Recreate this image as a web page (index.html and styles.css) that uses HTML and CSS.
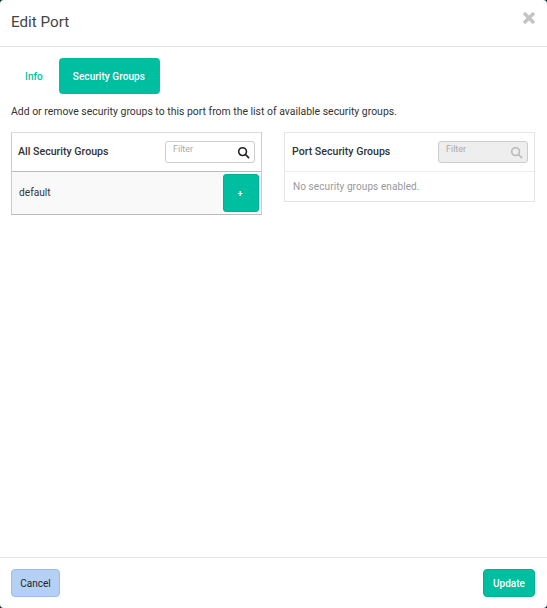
FILE: index.html
```html
<!DOCTYPE html>
<html lang="en">
<head>
<meta charset="utf-8">
<title>Edit Port</title>
<link rel="stylesheet" href="styles.css">
</head>
<body>
<div class="modal">
  <header class="modal-header">
    <h1 class="modal-title">Edit Port</h1>
    <svg class="close" viewBox="0 0 14 14" width="14" height="14" aria-label="Close"><path d="M2 2l10 10M12 2L2 12" /></svg>
  </header>
  <main class="modal-body">
    <nav class="tabs">
      <a class="tab">Info</a>
      <a class="tab active">Security Groups</a>
    </nav>
    <p class="help">Add or remove security groups to this port from the list of available security groups.</p>
    <div class="columns">
      <section class="panel panel-all">
        <div class="panel-head">
          <h2 class="panel-title">All Security Groups</h2>
          <div class="filter">
            <span class="filter-text">Filter</span>
            <svg class="search" viewBox="0 0 14 14" width="13" height="13"><circle cx="6" cy="6" r="4.2"/><path d="M9 9l4 4"/></svg>
          </div>
        </div>
        <div class="row">
          <span class="row-name">default</span>
          <button class="add">+</button>
        </div>
      </section>
      <section class="panel panel-port">
        <div class="panel-head">
          <h2 class="panel-title">Port Security Groups</h2>
          <div class="filter disabled">
            <span class="filter-text">Filter</span>
            <svg class="search" viewBox="0 0 14 14" width="13" height="13"><circle cx="6" cy="6" r="4.2"/><path d="M9 9l4 4"/></svg>
          </div>
        </div>
        <div class="empty">No security groups enabled.</div>
      </section>
    </div>
  </main>
  <footer class="modal-footer">
    <button class="btn cancel">Cancel</button>
    <button class="btn update">Update</button>
  </footer>
</div>
</body>
</html>
```
FILE: styles.css
```css
* { box-sizing: border-box; }
html, body { height: 100%; }
body {
  margin: 0;
  background: #0d3b3a;
  font-family: "Roboto", "Liberation Sans", sans-serif;
  font-size: 10.45px;
  color: #333;
}
.modal {
  height: 608px;
  background: #fff;
  border-radius: 4px;
  display: flex;
  flex-direction: column;
}
.modal-header {
  height: 47px;
  padding: 0 12px 0 11px;
  border-bottom: 1px solid #e5e5e5;
  display: flex;
  align-items: center;
  justify-content: space-between;
}
.modal-title {
  margin: 0 0 2px;
  font-size: 15.2px;
  font-weight: 400;
  color: #444;
}
.close { margin: 0 -1px 11px 0; }
.close path { stroke: #c4c4c4; stroke-width: 3.4; fill: none; }
.modal-body { flex: 1; padding: 11px 12px 0 11px; }
.tabs { display: flex; gap: 2px; }
.tab {
  height: 36px;
  padding: 0 14px;
  display: flex;
  align-items: center;
  font-size: 10px;
  font-weight: 500;
  letter-spacing: 0.06px;
  color: #00bfa0;
  border-radius: 4px;
}
.tab.active { background: #00bfa0; color: #fff; padding-right: 15px; }
.help { margin: 11px 0 14px; line-height: 13px; color: #333; }
.columns { display: flex; justify-content: space-between; align-items: flex-start; }
.panel { width: 251px; border: 1px solid #e5e5e5; }
.panel-head {
  height: 38px;
  padding: 0 6px 0 6px;
  display: flex;
  align-items: center;
  justify-content: space-between;
}
.panel-title { margin: 0 0 2px; font-size: 10.6px; font-weight: 500; color: #333; }
.panel-port .panel-title { padding-left: 1px; }
.filter {
  width: 90px;
  height: 22px;
  border: 1px solid #ccc;
  border-radius: 3px;
  padding: 0 4px 0 7px;
  display: flex;
  justify-content: space-between;
  align-items: center;
}
.filter-text { font-size: 9px; color: #aaa; margin-bottom: 6px; }
.search circle, .search path { fill: none; stroke: #222; stroke-width: 1.7; }
.filter.disabled { background: #eee; }
.filter.disabled .search circle, .filter.disabled .search path { stroke: #bbb; }
.panel-all { border-color: #ddd #ccc #bbb; }
.row {
  height: 43px;
  border-top: 1px solid #bbb;
  background: #f9f9f9;
  padding: 2px 2px 2px 7px;
  display: flex;
  align-items: center;
  justify-content: space-between;
}
.row-name { color: #333; margin-bottom: 2px; font-size: 10.2px; }
.add {
  width: 36px;
  height: 38px;
  border: 1px solid #00b096;
  border-radius: 3px;
  background: #00bfa0;
  color: #fff;
  padding: 2px 2px 0 0;
  font: 500 9px "Roboto", sans-serif;
}
.empty {
  height: 30px;
  border-top: 1px solid #eee;
  padding: 0 0 1px 8px;
  display: flex;
  align-items: center;
  font-size: 10px;
  letter-spacing: 0.09px;
  color: #999;
}
.modal-footer {
  height: 51px;
  border-top: 1px solid #e5e5e5;
  padding: 11px 12px 11px 11px;
  display: flex;
  justify-content: space-between;
}
.btn {
  height: 28px;
  border-radius: 4px;
  font-family: "Roboto", sans-serif;
  font-size: 10px;
  font-weight: 500;
}
.cancel { width: 49px; background: #b5d0f5; border: 1px solid #9dbce8; color: #222; font-weight: 400; }
.update { width: 52px; background: #00bfa0; border: 1px solid #00b096; color: #fff; }
```
